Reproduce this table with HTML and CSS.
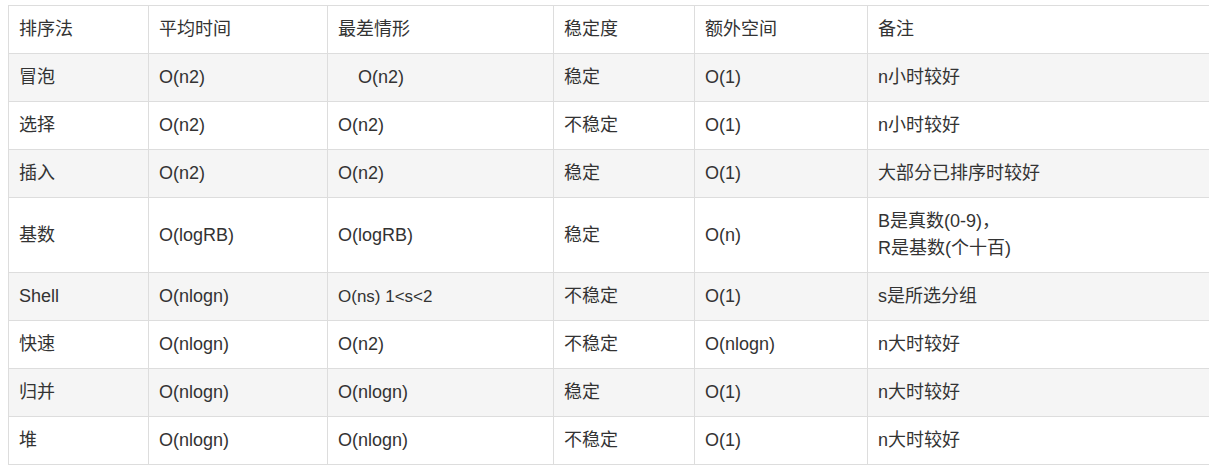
FILE: index.html
```html
<!DOCTYPE html>
<html lang="zh-CN">
<head>
<meta charset="utf-8">
<title>排序算法比较</title>
<link rel="stylesheet" href="styles.css">
</head>
<body>
<table class="sort-table">
  <colgroup>
    <col class="c1"><col class="c2"><col class="c3"><col class="c4"><col class="c5"><col class="c6">
  </colgroup>
  <thead>
    <tr><th>排序法</th><th>平均时间</th><th>最差情形</th><th>稳定度</th><th>额外空间</th><th>备注</th></tr>
  </thead>
  <tbody>
    <tr><td>冒泡</td><td>O(n2)</td><td>&nbsp;&nbsp;&nbsp;&nbsp;O(n2)</td><td>稳定</td><td>O(1)</td><td>n小时较好</td></tr>
    <tr><td>选择</td><td>O(n2)</td><td>O(n2)</td><td>不稳定</td><td>O(1)</td><td>n小时较好</td></tr>
    <tr><td>插入</td><td>O(n2)</td><td>O(n2)</td><td>稳定</td><td>O(1)</td><td>大部分已排序时较好</td></tr>
    <tr><td>基数</td><td>O(logRB)</td><td>O(logRB)</td><td>稳定</td><td>O(n)</td><td>B是真数(0-9)，<br>R是基数(个十百)</td></tr>
    <tr><td>Shell</td><td>O(nlogn)</td><td><span class="small">O(ns) 1&lt;s&lt;2</span></td><td>不稳定</td><td>O(1)</td><td>s是所选分组</td></tr>
    <tr><td>快速</td><td>O(nlogn)</td><td>O(n2)</td><td>不稳定</td><td>O(nlogn)</td><td>n大时较好</td></tr>
    <tr><td>归并</td><td>O(nlogn)</td><td>O(nlogn)</td><td>稳定</td><td>O(1)</td><td>n大时较好</td></tr>
    <tr><td>堆</td><td>O(nlogn)</td><td>O(nlogn)</td><td>不稳定</td><td>O(1)</td><td>n大时较好</td></tr>
  </tbody>
</table>
</body>
</html>
```
FILE: styles.css
```css
html, body {
  background: #ffffff;
}
body {
  margin: 5px 8px;
  font-family: "Liberation Sans", Arial, "Noto Sans CJK SC", sans-serif;
  font-size: 18px;
  color: #333333;
}
.sort-table {
  border-collapse: collapse;
  table-layout: fixed;
  width: 1202px;
}
.sort-table .c1 { width: 140px; }
.sort-table .c2 { width: 179px; }
.sort-table .c3 { width: 226px; }
.sort-table .c4 { width: 141px; }
.sort-table .c5 { width: 173px; }
.sort-table th,
.sort-table td {
  border: 1px solid #dddddd;
  padding: 10px;
  line-height: 27px;
  text-align: left;
  vertical-align: middle;
  font-weight: normal;
}
.sort-table tbody tr:nth-child(odd) {
  background: #f5f5f5;
}
.sort-table .small {
  font-size: 17px;
}
```
